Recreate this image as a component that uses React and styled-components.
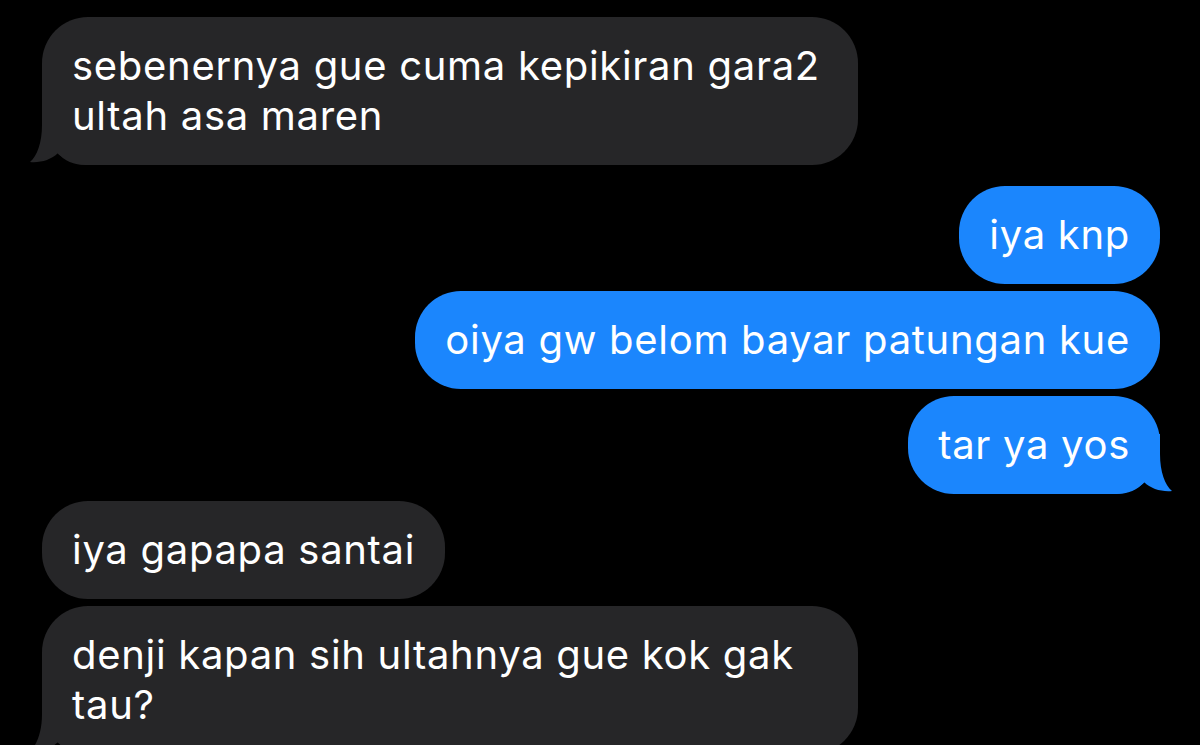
import React from "react";
import styled, { createGlobalStyle } from "styled-components";

const GlobalStyle = createGlobalStyle`
  html, body {
    margin: 0;
    padding: 0;
    background: #000;
    overflow: hidden;
  }
`;

const Thread = styled.div`
  display: flex;
  flex-direction: column;
  gap: 7px;
  padding: 17px 40px 0 42px;
  height: 745px;
  box-sizing: border-box;
  font-family: Inter, "Liberation Sans", sans-serif;
`;

const Bubble = styled.div`
  position: relative;
  align-self: ${(p) => (p.$mine ? "flex-end" : "flex-start")};
  max-width: 816px;
  box-sizing: border-box;
  margin-top: ${(p) => (p.$newGroup ? "14px" : "0")};
  padding: 24px 30px;
  border-radius: 46px;
  background: ${(p) => (p.$mine ? "#1b86fd" : "#262628")};
  color: #fff;
  font-size: 40px;
  line-height: 50px;
  letter-spacing: 0.7px;
  flex-shrink: 0;
`;

const Text = styled.span`
  position: relative;
  z-index: 1;
`;

const TailSvg = styled.svg`
  position: absolute;
  bottom: 0;
  width: 60px;
  height: 60px;
  ${(p) => (p.$mine ? "right: -12px; transform: scaleX(-1);" : "left: -12px;")}
`;

const Tail = ({ mine }) => (
  <TailSvg $mine={mine} viewBox="0 0 60 60">
    <path
      d="M12 0 L12 20 C12 38 7 51 0 57 C10 58 21 55 28 48 C34 56 44 60 56 60 L60 60 L60 0 Z"
      fill={mine ? "#1b86fd" : "#262628"}
    />
  </TailSvg>
);

const messages = [
  { text: "sebenernya gue cuma kepikiran gara2 ultah asa maren", mine: false, tail: true },
  { text: "iya knp", mine: true, newGroup: true },
  { text: "oiya gw belom bayar patungan kue", mine: true },
  { text: "tar ya yos", mine: true, tail: true },
  { text: "iya gapapa santai", mine: false },
  { text: "denji kapan sih ultahnya gue kok gak tau?", mine: false, tail: true },
];

export default function App() {
  return (
    <>
      <GlobalStyle />
      <Thread>
        {messages.map((m, i) => (
          <Bubble key={i} $mine={m.mine} $newGroup={m.newGroup}>
            {m.tail && <Tail mine={m.mine} />}
            <Text>{m.text}</Text>
          </Bubble>
        ))}
      </Thread>
    </>
  );
}
